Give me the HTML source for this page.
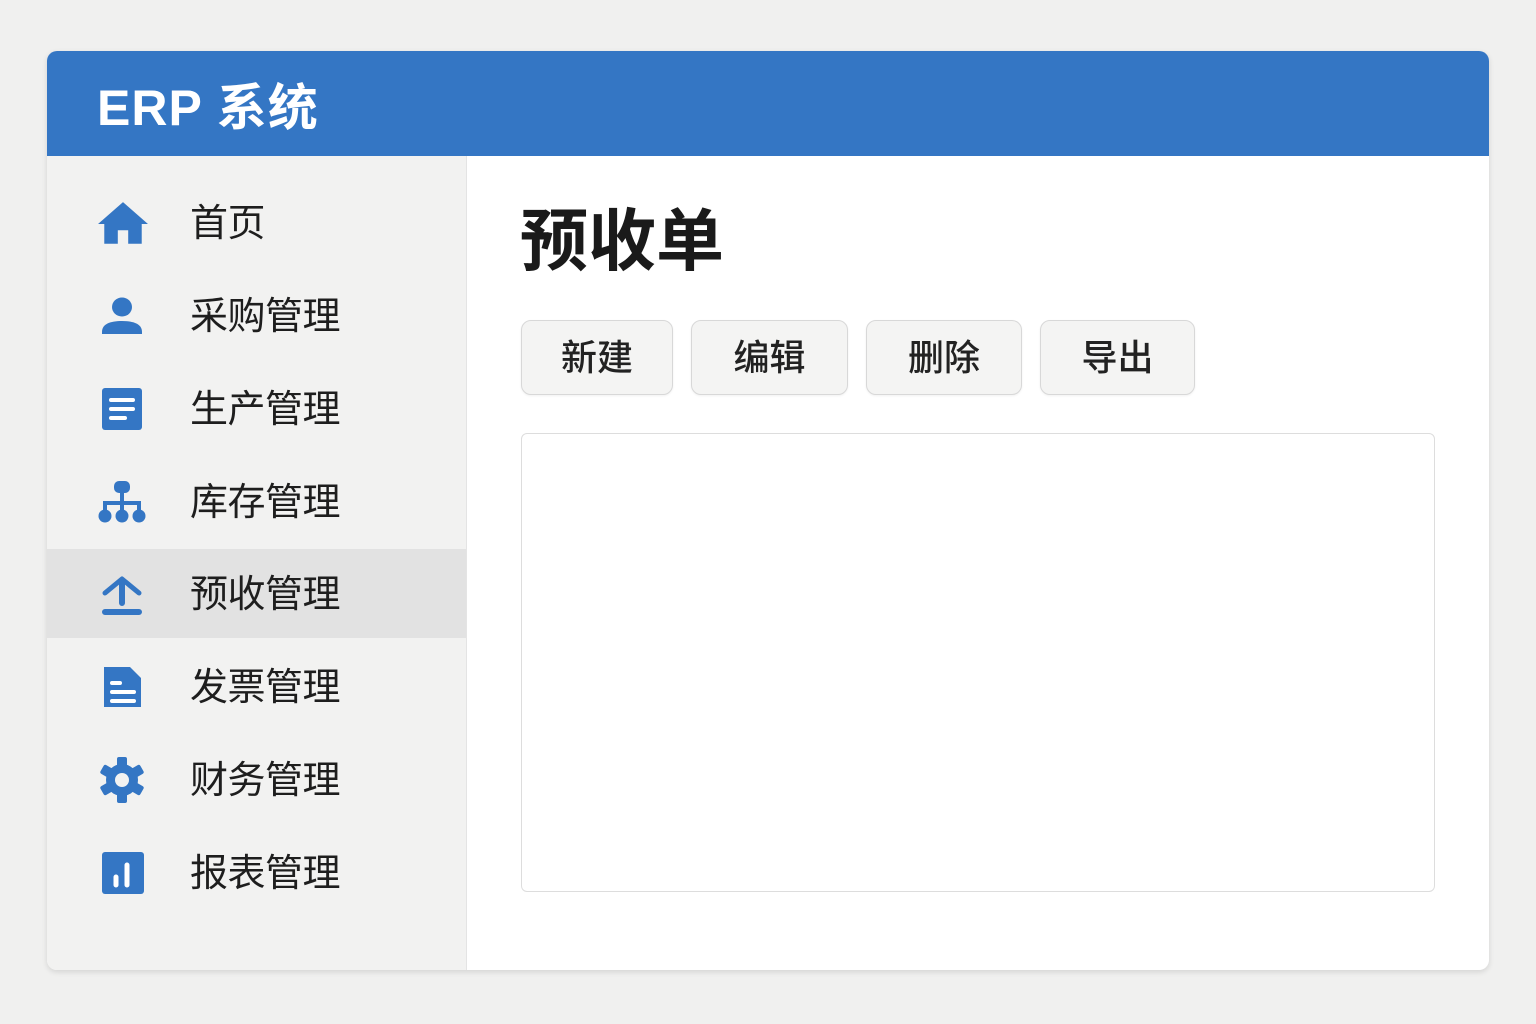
<!DOCTYPE html><html><head><meta charset="utf-8"><style>
body{margin:0;width:1536px;height:1024px;background:#f0f0ef;font-family:"Liberation Sans","Noto Sans CJK SC",sans-serif;position:relative;overflow:hidden}
.card{position:absolute;left:47px;top:51px;width:1442px;height:919px;border-radius:10px;background:#fff;overflow:hidden;box-shadow:0 2px 6px rgba(0,0,0,.12)}
.hd{position:absolute;left:0;top:0;width:100%;height:105px;background:#3476c4}
.hd span{position:absolute;left:50px;top:22px;font-size:50px;color:#fff;font-weight:700;letter-spacing:1px;line-height:70px}
.sb{position:absolute;left:0;top:105px;width:419px;height:814px;background:#f2f2f1;border-right:1px solid #e4e4e4}
.it{position:absolute;left:0;width:419px;height:89px}
.it.a{background:#e2e2e2}
.it svg{position:absolute;left:50px;top:20px}
.it span{position:absolute;left:143px;top:23px;font-size:38px;color:#1e1e1e;line-height:46px;letter-spacing:-0.5px}
h1{position:absolute;left:473px;top:150px;margin:0;font-size:68px;font-weight:700;color:#1a1a1a;line-height:82px}
.b{position:absolute;top:269px;height:73px;border:1px solid #d8d8d8;border-radius:10px;background:#f4f4f3;font-size:36px;font-weight:500;color:#222;text-align:center;line-height:73px;box-shadow:0 1px 2px rgba(0,0,0,.06)}
.box{position:absolute;left:474px;top:382px;width:912px;height:457px;border:1px solid #ddd;border-radius:6px}
</style></head><body><div class="card">
<div class="hd"><span>ERP 系统</span></div>
<div class="sb">
<div class="it" style="top:22px"><svg width="52" height="52" viewBox="0 0 50 50"><path d="M25 4 1 25h6v19h13V31h10v13h13V25h6z" fill="#3476c4"/></svg><span>首页</span></div>
<div class="it" style="top:115px"><svg width="50" height="50" viewBox="0 0 50 50"><ellipse cx="25" cy="16" rx="10" ry="9.5" fill="#3476c4"/><path d="M5 41c0-8 8-11 20-11s20 3 20 11v2H5z" fill="#3476c4"/></svg><span>采购管理</span></div>
<div class="it" style="top:208px"><svg width="50" height="50" viewBox="0 0 50 50"><rect x="5" y="4" width="40" height="42" rx="3" fill="#3476c4"/><path d="M14 16h22M14 25h22M14 34h14" stroke="#fff" stroke-width="4" stroke-linecap="round"/></svg><span>生产管理</span></div>
<div class="it" style="top:301px"><svg width="50" height="50" viewBox="0 0 50 50" fill="#3476c4"><rect x="17" y="4" width="16" height="12" rx="5"/><path d="M25 14v10M8 34v-8h34v8M25 24v10" stroke="#3476c4" stroke-width="4" fill="none"/><circle cx="8" cy="39" r="6.5"/><circle cx="25" cy="39" r="6.5"/><circle cx="42" cy="39" r="6.5"/></svg><span>库存管理</span></div>
<div class="it a" style="top:393px"><svg width="50" height="50" viewBox="0 0 50 50"><path d="M8 24 25 10l17 14" stroke="#3476c4" stroke-width="5" stroke-linecap="round" stroke-linejoin="round" fill="none"/><path d="M25 12v22M8 43h34" stroke="#3476c4" stroke-width="6" stroke-linecap="round" fill="none"/></svg><span>预收管理</span></div>
<div class="it" style="top:486px"><svg width="50" height="50" viewBox="0 0 50 50"><path d="M7 5h26l11 11v29H7z" fill="#3476c4"/><path d="M15 21h8M15 30h22M15 39h22" stroke="#fff" stroke-width="4" stroke-linecap="round"/></svg><span>发票管理</span></div>
<div class="it" style="top:579px"><svg width="50" height="50" viewBox="0 0 50 50"><g fill="#3476c4" transform="translate(25 25)"><circle r="16"/><rect x="-5" y="-23" width="10" height="46" rx="2"/><rect x="-5" y="-23" width="10" height="46" rx="2" transform="rotate(60)"/><rect x="-5" y="-23" width="10" height="46" rx="2" transform="rotate(120)"/></g><circle cx="25" cy="25" r="7" fill="#f2f2f1"/></svg><span>财务管理</span></div>
<div class="it" style="top:672px"><svg width="50" height="50" viewBox="0 0 50 50"><rect x="5" y="4" width="42" height="42" rx="3" fill="#3476c4"/><path d="M19 29v8M30 17v20" stroke="#fff" stroke-width="5" stroke-linecap="round"/></svg><span>报表管理</span></div>
</div>
<h1>预收单</h1>
<div class="b" style="left:474px;width:150px">新建</div>
<div class="b" style="left:644px;width:155px">编辑</div>
<div class="b" style="left:819px;width:154px">删除</div>
<div class="b" style="left:993px;width:153px">导出</div>
<div class="box"></div>
</div></body></html>
